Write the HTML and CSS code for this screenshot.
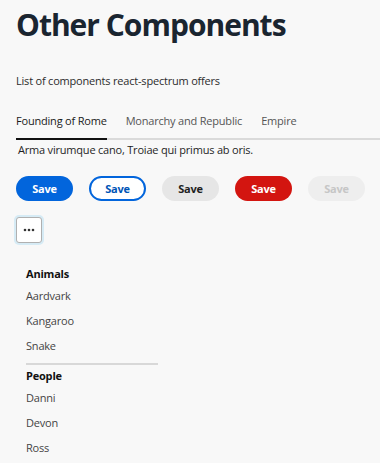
FILE: index.html
```html
<!DOCTYPE html>
<html lang="en">
<head>
<meta charset="utf-8">
<title>Other Components</title>
<link rel="stylesheet" href="styles.css">
</head>
<body>
<main class="page">
  <h1 class="title">Other Components</h1>
  <p class="subtitle">List of components react-spectrum offers</p>

  <div class="tabs">
    <div class="tablist">
      <span class="tab tab-active">Founding of Rome</span>
      <span class="tab">Monarchy and Republic</span>
      <span class="tab">Empire</span>
    </div>
    <p class="panel">Arma virumque cano, Troiae qui primus ab oris.</p>
  </div>

  <div class="buttons">
    <button class="btn btn-accent">Save</button>
    <button class="btn btn-outline">Save</button>
    <button class="btn btn-secondary">Save</button>
    <button class="btn btn-negative">Save</button>
    <button class="btn btn-disabled" disabled>Save</button>
  </div>

  <div class="action-wrap">
    <button class="action" aria-label="More">
      <svg width="12" height="4" viewBox="0 0 12 4"><circle cx="2" cy="2" r="1.3" fill="#333"/><circle cx="6" cy="2" r="1.3" fill="#333"/><circle cx="10" cy="2" r="1.3" fill="#333"/></svg>
    </button>
  </div>

  <div class="listbox">
    <div class="section">
      <div class="section-head">Animals</div>
      <div class="item">Aardvark</div>
      <div class="item">Kangaroo</div>
      <div class="item">Snake</div>
    </div>
    <div class="divider"></div>
    <div class="section">
      <div class="section-head">People</div>
      <div class="item">Danni</div>
      <div class="item">Devon</div>
      <div class="item">Ross</div>
    </div>
  </div>
</main>
</body>
</html>
```

FILE: styles.css
```css
html, body {
  margin: 0;
  padding: 0;
  background: #f8f8f8;
}
body {
  font-family: "Open Sans", "Noto Sans", sans-serif;
  color: #222;
}
.page {
  padding: 0 0 0 16px;
}
.title {
  margin: 0;
  padding-top: 4px;
  font-size: 30px;
  line-height: 42px;
  font-weight: 700;
  color: #1a2530;
  letter-spacing: -1px;
}
.subtitle {
  margin: 27px 0 0;
  font-size: 11px;
  line-height: 16px;
  color: #2c2c2c;
  letter-spacing: -0.2px;
}
.tabs {
  margin-top: 19px;
}
.tablist {
  display: flex;
  gap: 19px;
  border-bottom: 2px solid #dadada;
}
.tab {
  font-size: 11px;
  letter-spacing: -0.2px;
  line-height: 16px;
  padding: 5px 0 9px;
  color: #555;
  margin-bottom: -2px;
  border-bottom: 2px solid transparent;
}
.tab-active {
  color: #1a1a1a;
  border-bottom-color: #111;
}
.panel {
  margin: 2px 0 0 2px;
  font-size: 11px;
  letter-spacing: -0.2px;
  line-height: 16px;
  color: #1f1f1f;
}
.buttons {
  display: flex;
  gap: 16px;
  margin-top: 18px;
}
.btn {
  width: 57px;
  height: 25px;
  box-sizing: border-box;
  border-radius: 13px;
  border: 2px solid transparent;
  font-family: "Open Sans", sans-serif;
  font-size: 11px;
  font-weight: 700;
  letter-spacing: -0.2px;
  padding: 0;
}
.btn-accent { background: #0265dc; color: #fff; }
.btn-outline { background: #fff; border-color: #0265dc; color: #0054b6; }
.btn-secondary { background: #e6e6e6; color: #1f1f1f; }
.btn-negative { background: #d31510; color: #fff; }
.btn-disabled { background: #eeeeee; color: #c6c6c6; }
.action-wrap {
  margin-top: 16px;
}
.action {
  width: 26px;
  height: 26px;
  box-sizing: border-box;
  border: 1px solid #b0b0b0;
  border-radius: 3px;
  background: #fff;
  box-shadow: 0 0 0 2px #d6ebf5;
  padding: 0;
  display: flex;
  align-items: center;
  justify-content: center;
}
.listbox {
  width: 132px;
  margin-top: 23px;
  padding-left: 10px;
}
.section-head {
  font-size: 11px;
  letter-spacing: -0.2px;
  font-weight: 700;
  color: #111;
  line-height: 16px;
  margin-bottom: 2px;
}
.item {
  font-size: 11px;
  letter-spacing: -0.2px;
  line-height: 16px;
  color: #444;
  padding: 4px 0 5px;
}
.divider {
  height: 2px;
  background: #d8d8d8;
  margin: 4px 0 3px;
}
```
